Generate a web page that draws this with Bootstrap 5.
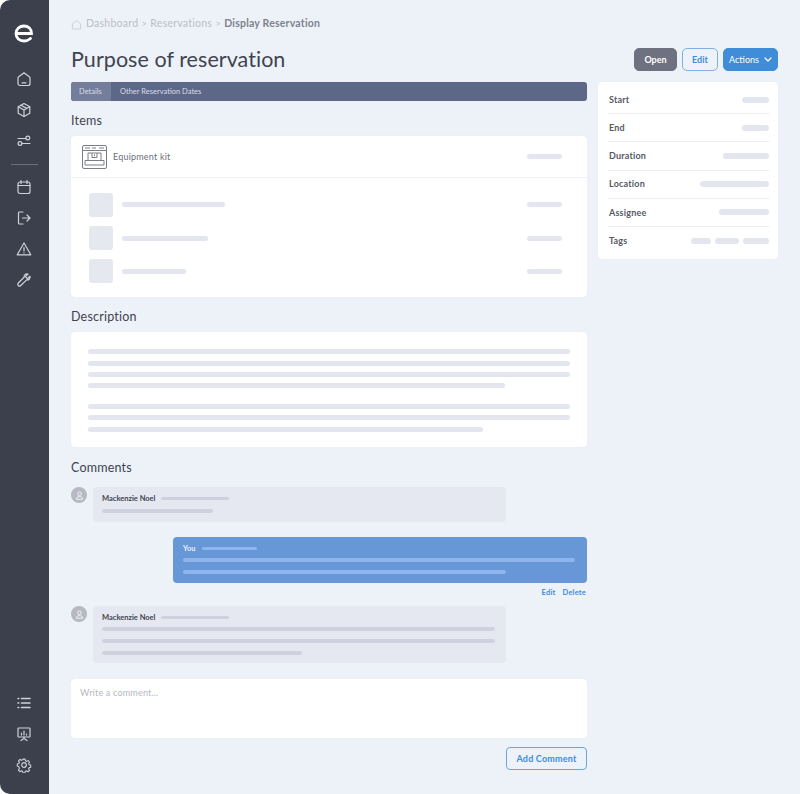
<!DOCTYPE html>
<html lang="en">
<head>
  <meta charset="UTF-8">
  <title>Display Reservation</title>
  <meta name="viewport" content="width=device-width, initial-scale=1">
  <link href="https://cdn.jsdelivr.net/npm/bootstrap@5.3.3/dist/css/bootstrap.min.css" rel="stylesheet">
  <style>
    html, body { height: 794px; overflow: hidden; }
    body { background: #fff; font-family: "Lato", "Noto Sans", sans-serif; color: #3f4450; font-size: 10px; }
    .shell { height: 794px; }
    .side { width: 49px; flex: none; background: #3b404c; border-radius: 10px 0 0 10px; }
    .side-link { display: flex; align-items: center; justify-content: center; height: 31.3px; padding-right: 1px; }
    .side-link svg { width: 16px; height: 16px; fill: none; stroke: #cfd2da; stroke-width: 1.2; stroke-linecap: round; stroke-linejoin: round; }
    .side-logo { margin-top: 21px; margin-bottom: 18px; height: 24px; display: flex; justify-content: center; padding-right: 1px; }
    .side-rule { border-top: 1px solid #6a6f7b; margin: 7px 11px 6px; }
    .side-foot { margin-top: auto; padding-bottom: 13px; }
    .page { padding: 0 22px; flex: 1 1 auto; background: #edf1f8; }
    .crumbs { height: 46px; padding-top: 2px; font-size: 10.5px; color: #bbbfc9; letter-spacing: .25px; }
    .crumbs b { color: #7e838e; font-weight: 700; letter-spacing: .2px; }
    .crumbs .sep { margin: 0 3.3px; font-size: 9px; }
    .page-title { font-size: 21.5px; font-weight: 400; color: #3f4450; letter-spacing: .05px; margin: 0; padding-top: 1px; }
    .head-row { height: 36px; padding-bottom: 10px; }
    .act-group { gap: 5px; }
    .act { font-size: 9px; height: 23px; border-radius: 5px; font-weight: 700; display: inline-flex; align-items: center; justify-content: center; line-height: 1; padding: 0; }
    .act-open { background: #6e7280; color: #fff; border: 1px solid #6e7280; width: 43px; }
    .act-edit { background: transparent; color: #3f8cd8; border: 1px solid #7fb0e0; width: 36px; }
    .act-more { background: #3f8cd8; color: #fff; border: 1px solid #3f8cd8; width: 55px; gap: 5px; font-weight: 400; }
    .columns { gap: 11px; }
    .col-main { width: 516px; flex: none; }
    .col-info { width: 180px; flex: none; }
    .tabbar { height: 19px; background: #5d6889; border-radius: 3px; overflow: hidden; font-size: 7.5px; color: #d8dce6; }
    .tabbar .tab-on { background: #747d9a; padding: 0 8px; display: flex; align-items: center; width: 40px; }
    .tabbar .tab-off { padding: 0 9px; display: flex; align-items: center; }
    .sec-title { font-size: 12.5px; color: #3f4450; font-weight: 400; margin: 0; letter-spacing: .2px; line-height: 15px; }
    .sec-items { margin-top: 12px; margin-bottom: 8px; }
    .sec-desc { margin-top: 12px; margin-bottom: 8px; }
    .sec-comments { margin-top: 13px; margin-bottom: 12px; }
    .panel { background: #fff; border-radius: 4px; border: 0; box-shadow: 0 0 2px rgba(60,70,100,.06); }
    .kit-head { height: 42px; padding: 0 25px 0 11px; border-bottom: 1px solid #f0f2f6; font-size: 9px; color: #6b6f7a; letter-spacing: .2px; }
    .kit-icon { margin-right: 6px; }
    .kit-body { padding: 10px 0 9px; }
    .kit-row { height: 33.4px; padding: 0 25px 0 18px; }
    .ph { display: block; height: 5px; border-radius: 3px; background: #e3e6ef; }
    .ph-box { width: 24px; height: 24px; background: #e6e8f0; border-radius: 3px; flex: none; margin-right: 9px; }
    .desc-lines { padding: 17px 17px 16px; height: 115px; }
    .desc-lines .ph { margin-bottom: 6.4px; }
    .desc-gap { height: 9px; }
    .info-row { height: 28.2px; margin: 0 9px 0 10px; border-bottom: 1px solid #eceef3; padding: 0 0 0 1px; font-size: 9px; color: #565a65; letter-spacing: .2px; font-weight: 700; }
    .info-row:last-child { border-bottom: 0; }
    .info-row .ph { height: 6px; }
    .avatar { width: 16px; height: 16px; background: #b6b9c3; border-radius: 50%; flex: none; display: flex; align-items: center; justify-content: center; }
    .bubble { background: #e5e8f1; border-radius: 4px; width: 413px; padding: 6px 11px 8px 9px; margin-left: 6px; }
    .bubble-short { height: 35px; }
    .who-row { margin-bottom: 4px; }
    .who-row-wide { margin-bottom: 5px; }
    .who { font-size: 7.5px; font-weight: 700; color: #3f4450; line-height: 11px; margin-right: 6px; }
    .bubble .ph { height: 4px; background: #cfd2de; }
    .bubble .line-gap { margin-bottom: 8px; }
    .thread-gap { margin-bottom: 15px; }
    .bubble-me { background: #6797d6; width: 414px; height: 46px; padding: 6px 12px 6px 10px; border-radius: 4px; margin-left: auto; }
    .bubble-me .who { color: #e6effa; margin-right: 6px; }
    .bubble-me .ph { background: #8fb5ee; height: 4px; }
    .bubble-me .line-gap { margin-bottom: 8px; }
    .mini-links { font-size: 7.5px; color: #3f8cd8; font-weight: 700; letter-spacing: .2px; height: 19px; gap: 7px; padding-right: 1px; margin-bottom: 4px; }
    .write-box { height: 59px; padding: 7px 9px; font-size: 9px; color: #b4b8c2; letter-spacing: .2px; margin-top: 16px; }
    .add-row { margin-top: 9px; }
    .btn-add { width: 81px; height: 23px; font-size: 9px; border: 1px solid #6ea6dc; color: #3f8cd8; border-radius: 4px; font-weight: 700; background: transparent; padding: 0; letter-spacing: .2px; }
  </style>
</head>
<body>
  <div class="shell d-flex">
    <nav class="side d-flex flex-column">
      <div class="side-logo">
        <svg width="20" height="24" viewBox="0 0 20 24" fill="none" stroke="#fff" stroke-width="2.8" stroke-linecap="round"><path d="M2.500 12.500h15c0-4.500-3.200-7.500-7.500-7.500S2 8 2 12.500 5.500 20 10 20c2.500 0 4.500-.8 6.500-2.500"/></svg>
      </div>
      <a class="side-link"><svg viewBox="0 0 16 16"><path d="M2 7.200c0-.6.2-1 .7-1.400L8 1.800l5.300 4c.5.4.7.8.7 1.400v5.300c0 1.100-.9 2-2 2H4c-1.100 0-2-.9-2-2z"/><path d="M6 11.800h4"/></svg></a>
      <a class="side-link"><svg viewBox="0 0 16 16"><path d="M8 1.500l5.800 3.200v6.600L8 14.500l-5.800-3.200V4.700z"/><path d="M2.300 4.800L8 8l5.700-3.200M8 8v6.500M5 3.200l5.800 3.200"/></svg></a>
      <a class="side-link"><svg viewBox="0 0 16 16"><circle cx="11.800" cy="5" r="1.900"/><circle cx="4" cy="10.500" r="1.900"/><path d="M2 5.500h7.800M6 10.500h8"/></svg></a>
      <div class="side-rule"></div>
      <a class="side-link"><svg viewBox="0 0 16 16"><rect x="2" y="3" width="12" height="11.500" rx="2"/><path d="M2 6.500h12M5 1.500v3M11 1.500v3"/></svg></a>
      <a class="side-link"><svg viewBox="0 0 16 16"><path d="M7 2H3.500a1 1 0 0 0-1 1v10a1 1 0 0 0 1 1H7"/><path d="M6.500 8H14M11 5l3 3-3 3"/></svg></a>
      <a class="side-link"><svg viewBox="0 0 16 16"><path d="M8 2l6.800 11.800H1.200z"/><path d="M8 6.500v3.500M8 11.800v.2"/></svg></a>
      <a class="side-link"><svg viewBox="0 0 16 16"><path d="M14 4.200l-2.600 2.400-2-2L12 2c-2-.7-4.300.9-3.900 3.300L2.300 11a1.700 1.700 0 0 0 2.500 2.500l5.800-5.600c2.200.4 4-1.600 3.400-3.700z"/></svg></a>
      <div class="side-foot">
        <a class="side-link"><svg viewBox="0 0 16 16"><path d="M5.500 3.500H14M5.500 8H14M5.500 12.500H14M2 3.500h.8M2 8h.8M2 12.500h.8" stroke-width="1.500"/></svg></a>
        <a class="side-link"><svg viewBox="0 0 16 16"><rect x="2" y="2" width="12" height="9" rx=".5"/><path d="M5.500 9V7M8 9V5M10.500 9V8M8 11v1.500M8 12.500l-3 2M8 12.500l3 2"/></svg></a>
        <a class="side-link"><svg viewBox="0 0 16 16"><circle cx="8" cy="8" r="2.300"/><path d="M6.800 1.500h2.400l.4 1.900 1.300.6 1.700-1 1.600 1.700-1 1.600.6 1.400 1.700.4v2.400l-1.800.4-.6 1.300 1 1.700-1.700 1.600-1.600-1-1.400.6-.4 1.700H6.800l-.4-1.800-1.300-.6-1.700 1-1.600-1.700 1-1.600L2.200 9.600.5 9.200V6.800l1.800-.4.6-1.300-1-1.700 1.700-1.600 1.600 1 1.400-.6z" transform="translate(.8 .8) scale(.9)"/></svg></a>
      </div>
    </nav>

    <main class="page">
      <div class="crumbs d-flex align-items-center">
        <svg class="me-1" width="11" height="11" viewBox="0 0 16 16" fill="none" stroke="#c6c9d2" stroke-width="1.2"><path d="M2 7l6-5 6 5v7.500H2z"/></svg>
        <span>Dashboard</span><span class="sep">&gt;</span><span>Reservations</span><span class="sep">&gt;</span><b>Display Reservation</b>
      </div>
      <div class="head-row d-flex align-items-center justify-content-between">
        <h1 class="page-title">Purpose of reservation</h1>
        <div class="act-group d-flex">
          <button class="btn act act-open">Open</button>
          <button class="btn act act-edit">Edit</button>
          <button class="btn act act-more">Actions <svg width="8" height="5" viewBox="0 0 8 5" fill="none" stroke="#fff" stroke-width="1.2" stroke-linecap="round" stroke-linejoin="round"><path d="M1 1l3 3 3-3"/></svg></button>
        </div>
      </div>

      <div class="columns d-flex">
        <div class="col-main">
          <div class="tabbar d-flex">
            <div class="tab-on">Details</div>
            <div class="tab-off">Other Reservation Dates</div>
          </div>

          <h2 class="sec-title sec-items">Items</h2>
          <div class="panel card">
            <div class="kit-head d-flex align-items-center">
              <svg class="kit-icon" width="25" height="24" viewBox="0 0 25 24" fill="none" stroke="#6b6f7a" stroke-width=".9"><rect x=".5" y=".5" width="24" height="23" rx="1.500"/><path d="M.5 5.500h24M3 3h5M10 3h4M17 3h5M3 15.500h19v4.500H3zM6 15.500V8h13v7.500M10 8v4.500h5V8M12.500 9.500v1.500"/></svg>
              <span>Equipment kit</span>
              <span class="ph ms-auto" style="width: 35px"></span>
            </div>
            <div class="kit-body">
              <div class="kit-row d-flex align-items-center"><span class="ph-box"></span><span class="ph" style="width: 103px"></span><span class="ph ms-auto" style="width: 35px"></span></div>
              <div class="kit-row d-flex align-items-center"><span class="ph-box"></span><span class="ph" style="width: 86px"></span><span class="ph ms-auto" style="width: 35px"></span></div>
              <div class="kit-row d-flex align-items-center"><span class="ph-box"></span><span class="ph" style="width: 64px"></span><span class="ph ms-auto" style="width: 35px"></span></div>
            </div>
          </div>

          <h2 class="sec-title sec-desc">Description</h2>
          <div class="panel desc-lines">
            <span class="ph" style="width: 100%"></span>
            <span class="ph" style="width: 100%"></span>
            <span class="ph" style="width: 100%"></span>
            <span class="ph" style="width: 86.5%"></span>
            <div class="desc-gap"></div>
            <span class="ph" style="width: 100%"></span>
            <span class="ph" style="width: 100%"></span>
            <span class="ph" style="width: 82%"></span>
          </div>

          <h2 class="sec-title sec-comments">Comments</h2>
          <div class="thread-gap d-flex">
            <span class="avatar"><svg width="9" height="9" viewBox="0 0 10 10" fill="none" stroke="#fff" stroke-width=".9"><circle cx="5" cy="3" r="2"/><path d="M1.500 9.200h7c0-2-1.500-3-3.500-3s-3.500 1-3.500 3z"/></svg></span>
            <div class="bubble bubble-short">
              <div class="who-row-wide d-flex align-items-center"><span class="who">Mackenzie Noel</span><span class="ph" style="width: 68px; height: 3px"></span></div>
              <span class="ph" style="width: 111px"></span>
            </div>
          </div>
          <div class="bubble-me">
            <div class="who-row d-flex align-items-center"><span class="who">You</span><span class="ph" style="width: 55px; height: 3px"></span></div>
            <span class="ph line-gap" style="width: 100%"></span>
            <span class="ph" style="width: 82.4%"></span>
          </div>
          <div class="mini-links d-flex justify-content-end align-items-center"><span>Edit</span><span>Delete</span></div>
          <div class="d-flex">
            <span class="avatar"><svg width="9" height="9" viewBox="0 0 10 10" fill="none" stroke="#fff" stroke-width=".9"><circle cx="5" cy="3" r="2"/><path d="M1.500 9.200h7c0-2-1.500-3-3.500-3s-3.500 1-3.500 3z"/></svg></span>
            <div class="bubble">
              <div class="who-row d-flex align-items-center"><span class="who">Mackenzie Noel</span><span class="ph" style="width: 68px; height: 3px"></span></div>
              <span class="ph line-gap" style="width: 100%"></span>
              <span class="ph line-gap" style="width: 100%"></span>
              <span class="ph" style="width: 51%"></span>
            </div>
          </div>
          <div class="panel write-box">Write a comment...</div>
          <div class="add-row d-flex justify-content-end"><button class="btn btn-add">Add Comment</button></div>
        </div>

        <aside class="col-info">
          <div class="panel py-1">
            <div class="info-row d-flex align-items-center justify-content-between"><span>Start</span><span class="ph" style="width: 27px"></span></div>
            <div class="info-row d-flex align-items-center justify-content-between"><span>End</span><span class="ph" style="width: 27px"></span></div>
            <div class="info-row d-flex align-items-center justify-content-between"><span>Duration</span><span class="ph" style="width: 46px"></span></div>
            <div class="info-row d-flex align-items-center justify-content-between"><span>Location</span><span class="ph" style="width: 69px"></span></div>
            <div class="info-row d-flex align-items-center justify-content-between"><span>Assignee</span><span class="ph" style="width: 50px"></span></div>
            <div class="info-row d-flex align-items-center justify-content-between"><span>Tags</span><span class="d-flex gap-1"><span class="ph" style="width: 20px"></span><span class="ph" style="width: 24px"></span><span class="ph" style="width: 26px"></span></span></div>
          </div>
        </aside>
      </div>
    </main>
  </div>
</body>
</html>
